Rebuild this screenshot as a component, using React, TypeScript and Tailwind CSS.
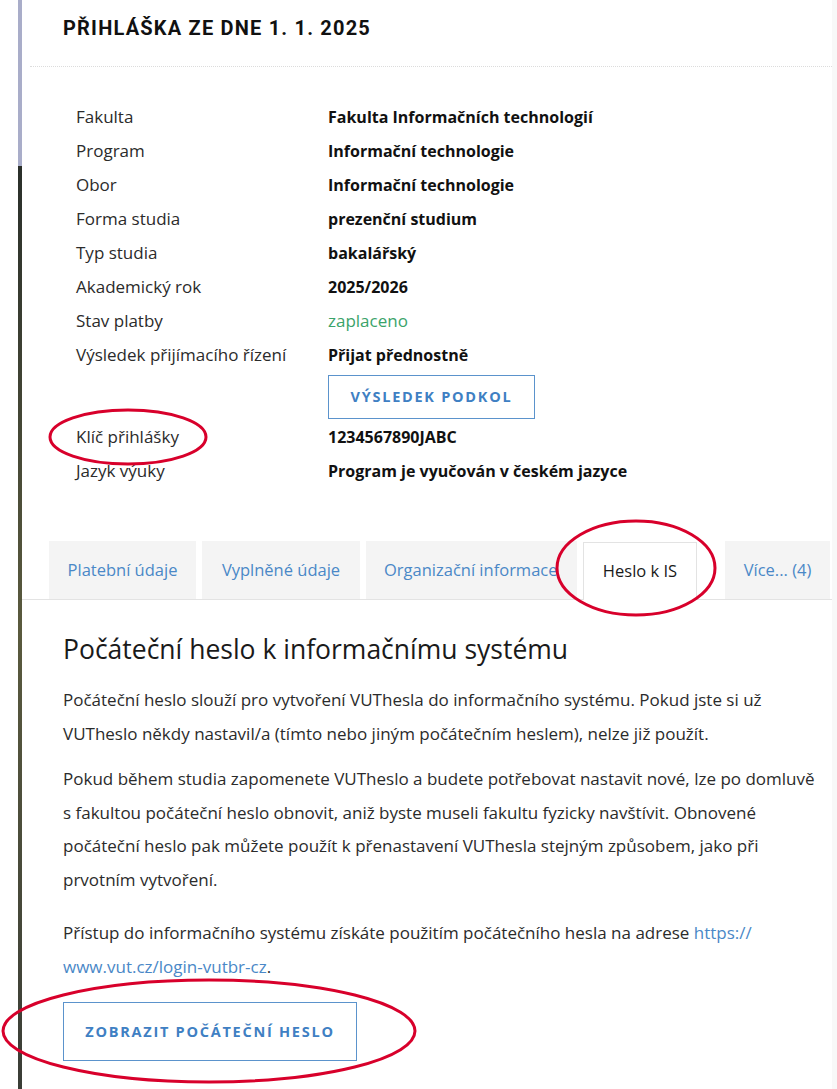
import React from "react";

const rows: [string, React.ReactNode][] = [
  ["Fakulta", "Fakulta Informačních technologií"],
  ["Program", "Informační technologie"],
  ["Obor", "Informační technologie"],
  ["Forma studia", "prezenční studium"],
  ["Typ studia", "bakalářský"],
  ["Akademický rok", "2025/2026"],
  ["Stav platby", <span className="text-[17px] font-normal text-[#3aa36a]">zaplaceno</span>],
  ["Výsledek přijímacího řízení", "Přijat přednostně"],
];

const rows2: [string, string][] = [
  ["Klíč přihlášky", "1234567890JABC"],
  ["Jazyk výuky", "Program je vyučován v českém jazyce"],
];

const Row = ({ label, value }: { label: string; value: React.ReactNode }) => (
  <div className="flex h-[34px] items-center">
    <div className="w-[252px] text-[#2b2b2b]">{label}</div>
    <div className="text-[16px] font-bold text-[#111]">{value}</div>
  </div>
);

const Tab = ({
  children,
  w,
  active,
}: {
  children: string;
  w: string;
  active?: boolean;
}) => (
  <div
    className={
      active
        ? `${w} relative top-[1px] flex h-[58px] items-center justify-center border border-b-0 border-[#e3e3e3] bg-white text-[16.5px] text-[#1a1a1a]`
        : `${w} flex h-[58px] items-center justify-center bg-[#f4f4f4] text-[16.5px] text-[#4a88c7]`
    }
  >
    {children}
  </div>
);

export default function App() {
  return (
    <div className="relative flex min-h-[1089px] bg-white font-['Open_Sans',sans-serif] text-[17px]">
      <div className="w-[18px] bg-white" />
      <div className="flex w-[4px] flex-col">
        <div className="h-[166px] bg-[#a9adc9]" />
        <div className="flex-1 bg-gradient-to-b from-[#2a2f2a] via-[#5a5a3e] to-[#3a3d36]" />
      </div>
      <main className="w-[810px] bg-white">
        <div className="flex h-[66px] items-start px-[41px] pt-[13px]">
          <h1 className="font-['Roboto',sans-serif] text-[20px] font-bold tracking-[0.06em] text-[#111]">
            PŘIHLÁŠKA ZE DNE 1. 1. 2025
          </h1>
        </div>
        <div className="ml-[8px] border-t border-dotted border-[#dcdcdc]" />

        <div className="pl-[54px] pt-[33px]">
          {rows.map(([l, v]) => (
            <Row key={l} label={l} value={v} />
          ))}
          <div className="flex pb-[1px] pl-[252px] pt-[3px]">
            <button className="h-[44px] w-[207px] border border-[#5b93cc] text-[14.5px] font-bold tracking-[0.12em] text-[#3f80c3]">
              VÝSLEDEK PODKOL
            </button>
          </div>
          {rows2.map(([l, v]) => (
            <Row key={l} label={l} value={v} />
          ))}
        </div>

        <div className="mt-[53px] flex items-end gap-[6px] border-b border-[#e3e3e3] pl-[27px]">
          <Tab w="w-[147px]">Platební údaje</Tab>
          <Tab w="w-[158px]">Vyplněné údaje</Tab>
          <div className="flex h-[58px] w-[211px] items-center overflow-hidden whitespace-nowrap bg-[#f4f4f4] pl-[18px] text-[16.5px] text-[#4a88c7]">
            Organizační informace
          </div>
          <Tab w="w-[114px]" active>
            Heslo k IS
          </Tab>
          <div className="ml-[22px]">
            <Tab w="w-[105px]">Více... (4)</Tab>
          </div>
        </div>

        <div className="px-[41px] pt-[31px] text-[#2b2b2b]">
          <h2 className="mb-[16px] text-[26.5px] font-normal leading-[36px] text-[#1a1a1a]">
            Počáteční heslo k informačnímu systému
          </h2>
          <p className="mb-[12px] whitespace-nowrap leading-[33.5px]">
            Počáteční heslo slouží pro vytvoření VUThesla do informačního systému. Pokud jste si už
            <br />
            VUTheslo někdy nastavil/a (tímto nebo jiným počátečním heslem), nelze již použít.
          </p>
          <p className="mb-[20px] whitespace-nowrap leading-[33.5px]">
            Pokud během studia zapomenete VUTheslo a budete potřebovat nastavit nové, lze po domluvě
            <br />
            s fakultou počáteční heslo obnovit, aniž byste museli fakultu fyzicky navštívit. Obnovené
            <br />
            počáteční heslo pak můžete použít k přenastavení VUThesla stejným způsobem, jako při
            <br />
            prvotním vytvoření.
          </p>
          <p className="whitespace-nowrap leading-[33.5px]">
            Přístup do informačního systému získáte použitím počátečního hesla na adrese{" "}
            <a className="text-[#4a88c7]">
              https://
              <br />
              www.vut.cz/login-vutbr-cz
            </a>
            .
          </p>
          <button className="mt-[19px] h-[59px] w-[294px] border border-[#5b93cc] text-[14.5px] font-bold tracking-[0.12em] text-[#3f80c3]">
            ZOBRAZIT POČÁTEČNÍ HESLO
          </button>
        </div>
      </main>
      <div className="flex-1 bg-[#f8f8f8]" />

      <svg className="pointer-events-none absolute left-0 top-0" width="837" height="1089">
        <g fill="none" stroke="#d8002b" strokeWidth="3">
          <ellipse cx="128" cy="437" rx="78" ry="27" />
          <ellipse cx="636" cy="568" rx="79" ry="47" />
          <ellipse cx="209" cy="1031" rx="206" ry="51" />
        </g>
      </svg>
    </div>
  );
}
